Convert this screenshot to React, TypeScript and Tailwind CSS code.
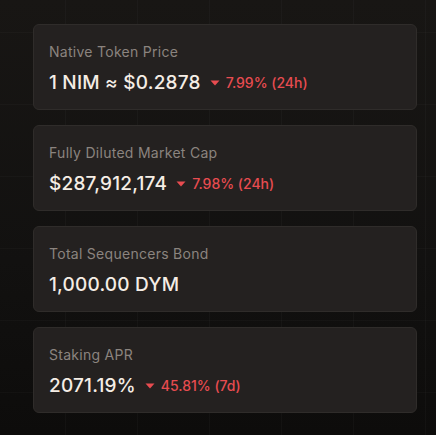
import React from "react";

type Stat = { label: string; value: string; change?: string };

const stats: Stat[] = [
  { label: "Native Token Price", value: "1 NIM ≈ $0.2878", change: "7.99% (24h)" },
  { label: "Fully Diluted Market Cap", value: "$287,912,174", change: "7.98% (24h)" },
  { label: "Total Sequencers Bond", value: "1,000.00 DYM" },
  { label: "Staking APR", value: "2071.19%", change: "45.81% (7d)" },
];

function Down() {
  return (
    <svg width="10" height="6" viewBox="0 0 10 6" className="shrink-0">
      <path d="M0.5 0.5 H9.5 L5 5.5 Z" fill="#e84c50" />
    </svg>
  );
}

export default function App() {
  return (
    <div
      className="relative w-[436px] h-[435px] overflow-hidden bg-[linear-gradient(180deg,#181614_0%,#121110_60%,#0d0c0b_100%)]"
      style={{ fontFamily: "Inter, 'Noto Sans', sans-serif" }}
    >
      <div className="absolute inset-0 bg-[linear-gradient(90deg,rgba(255,255,255,0.025)_1px,transparent_1px),linear-gradient(0deg,rgba(255,255,255,0.02)_1px,transparent_1px)] bg-[size:72px_72px] bg-[position:-7px_33px]" />
      <div className="relative flex flex-col gap-[15px] pl-[33px] pr-[19px] pt-[24px]">
        {stats.map((s) => (
          <div
            key={s.label}
            className="h-[86px] rounded-[6px] border border-[#2f2c2a] bg-[#242120] px-[15px] pt-[17px] flex flex-col gap-[8px]"
          >
            <div className="text-[14px] leading-[20px] text-[#8b847f] tracking-[0.28px]">{s.label}</div>
            <div className="flex items-center gap-[9px]">
              <span className="text-[19px] leading-[26px] font-medium text-[#f5ede5] tracking-[0.2px]">{s.value}</span>
              {s.change && (
                <span className="flex items-center gap-[6px] text-[14px] leading-[20px] font-medium text-[#e84c50]">
                  <Down />
                  {s.change}
                </span>
              )}
            </div>
          </div>
        ))}
      </div>
    </div>
  );
}
